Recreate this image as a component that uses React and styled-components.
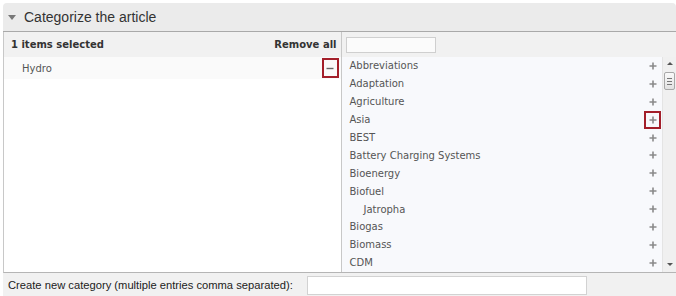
import React from "react";
import styled, { createGlobalStyle } from "styled-components";

const GlobalStyle = createGlobalStyle`
    html, body {
        margin: 0;
        padding: 0;
        background: #fff;
    }
`;

const Panel = styled.div`
    width: 673px;
    margin: 3px 0 0 3px;
    font-family: "DejaVu Sans", Verdana, sans-serif;
`;

const PanelHeader = styled.div`
    display: flex;
    align-items: center;
    height: 28px;
    padding-left: 5px;
    background: #ebebeb;
    border-radius: 4px 4px 0 0;
    border-bottom: 1px solid #a9a9a9;
    font-family: "Liberation Sans", Arial, sans-serif;
    font-size: 14px;
    color: #333;
`;

const Caret = styled.span`
    width: 0;
    height: 0;
    margin-right: 8px;
    border-left: 4px solid transparent;
    border-right: 4px solid transparent;
    border-top: 5px solid #777;
`;

const Columns = styled.div`
    display: flex;
    height: 240px;
    border-left: 1px solid #c8c8c8;
    border-bottom: 1px solid #b5b5b5;
`;

const Column = styled.div`
    display: flex;
    flex-direction: column;
    width: ${(props) => props.width}px;
    border-right: ${(props) => (props.divider ? "1px solid #c8c8c8" : "none")};
    background: #fff;
`;

const ColumnHead = styled.div`
    display: flex;
    align-items: center;
    justify-content: space-between;
    height: 25px;
    padding: 0 4px 0 ${(props) => props.left || 4}px;
    background: #f1f1f1;
    font-size: 10px;
    font-weight: bold;
    color: #333;
`;

const SearchBox = styled.input`
    width: 88px;
    height: 14px;
    padding: 0;
    border: 1px solid #cfcfcf;
    background: #fbfbfb;
`;

const ListArea = styled.div`
    display: flex;
    flex: 1;
    background: ${(props) => props.bg};
`;

const List = styled.div`
    flex: 1;
`;

const Row = styled.div`
    display: flex;
    align-items: center;
    justify-content: space-between;
    height: ${(props) => props.h}px;
    padding-left: ${(props) => props.left}px;
    padding-right: ${(props) => props.right}px;
    font-size: 10px;
    color: #555;
    background: ${(props) => props.bg || "transparent"};
`;

const Action = styled.span`
    display: flex;
    align-items: center;
    justify-content: center;
    box-sizing: border-box;
    width: 17px;
    height: ${(props) => props.h}px;
    border: 2px solid ${(props) => (props.marked ? "#a31f2a" : "transparent")};
`;

const Scrollbar = styled.div`
    position: relative;
    width: 13px;
    background: #f0f0f0;
    border-left: 1px solid #e4e4e4;
`;

const ScrollArrow = styled.div`
    position: absolute;
    left: 4px;
    ${(props) => (props.up ? "top: 5px;" : "bottom: 6px;")}
    width: 0;
    height: 0;
    border-left: 3px solid transparent;
    border-right: 3px solid transparent;
    ${(props) =>
        props.up ? "border-bottom: 3px solid #555;" : "border-top: 3px solid #555;"}
`;

const Thumb = styled.div`
    position: absolute;
    left: 1px;
    top: 15px;
    width: 9px;
    height: 16px;
    border: 1px solid #a8a8a8;
    border-radius: 2px;
    background: linear-gradient(#fafafa, #e2e2e2);
    display: flex;
    flex-direction: column;
    align-items: center;
    justify-content: center;
    gap: 2px;
`;

const Grip = styled.span`
    width: 5px;
    height: 1px;
    background: #777;
`;

const Footer = styled.div`
    display: flex;
    align-items: center;
    gap: 14px;
    height: 24px;
    padding-left: 5px;
    background: #f1f1f1;
    font-family: "Liberation Sans", Arial, sans-serif;
    font-size: 11.2px;
    color: #222;
`;

const NewInput = styled.input`
    width: 278px;
    height: 17px;
    padding: 0;
    border: 1px solid #d2d2d2;
    background: #fff;
`;

const PlusIcon = () => (
    <svg width="8" height="8" viewBox="0 0 8 8">
        <path d="M4 0.5V7.5M0.5 4H7.5" stroke="#8a8a8a" strokeWidth="1.6" />
    </svg>
);

const MinusIcon = () => (
    <svg width="8" height="8" viewBox="0 0 8 8">
        <path d="M0.5 4.5H7.5" stroke="#666" strokeWidth="1.4" />
    </svg>
);

const categories = [
    { name: "Abbreviations" },
    { name: "Adaptation" },
    { name: "Agriculture" },
    { name: "Asia", marked: true },
    { name: "BEST" },
    { name: "Battery Charging Systems" },
    { name: "Bioenergy" },
    { name: "Biofuel" },
    { name: "Jatropha", indent: 14 },
    { name: "Biogas" },
    { name: "Biomass" },
    { name: "CDM" },
];

export default function App() {
    return (
        <>
            <GlobalStyle />
            <Panel>
                <PanelHeader>
                    <Caret />
                    Categorize the article
                </PanelHeader>
                <Columns>
                    <Column width={337} divider>
                        <ColumnHead left={7}>
                            <span>1 items selected</span>
                            <span>Remove all</span>
                        </ColumnHead>
                        <ListArea bg="#fff">
                            <List>
                                <Row h={22} left={18} right={2} bg="#fafafa">
                                    <span>Hydro</span>
                                    <Action marked h={20}>
                                        <MinusIcon />
                                    </Action>
                                </Row>
                            </List>
                        </ListArea>
                    </Column>
                    <Column width={335}>
                        <ColumnHead>
                            <SearchBox />
                        </ColumnHead>
                        <ListArea bg="#f8f9fc">
                            <List>
                                {categories.map((c) => (
                                    <Row
                                        key={c.name}
                                        h={17.9}
                                        left={8 + (c.indent || 0)}
                                        right={1}
                                    >
                                        <span>{c.name}</span>
                                        <Action marked={c.marked} h={18}>
                                            <PlusIcon />
                                        </Action>
                                    </Row>
                                ))}
                            </List>
                            <Scrollbar>
                                <ScrollArrow up />
                                <Thumb>
                                    <Grip />
                                    <Grip />
                                    <Grip />
                                </Thumb>
                                <ScrollArrow />
                            </Scrollbar>
                        </ListArea>
                    </Column>
                </Columns>
                <Footer>
                    Create new category (multiple entries comma separated):
                    <NewInput />
                </Footer>
            </Panel>
        </>
    );
}
